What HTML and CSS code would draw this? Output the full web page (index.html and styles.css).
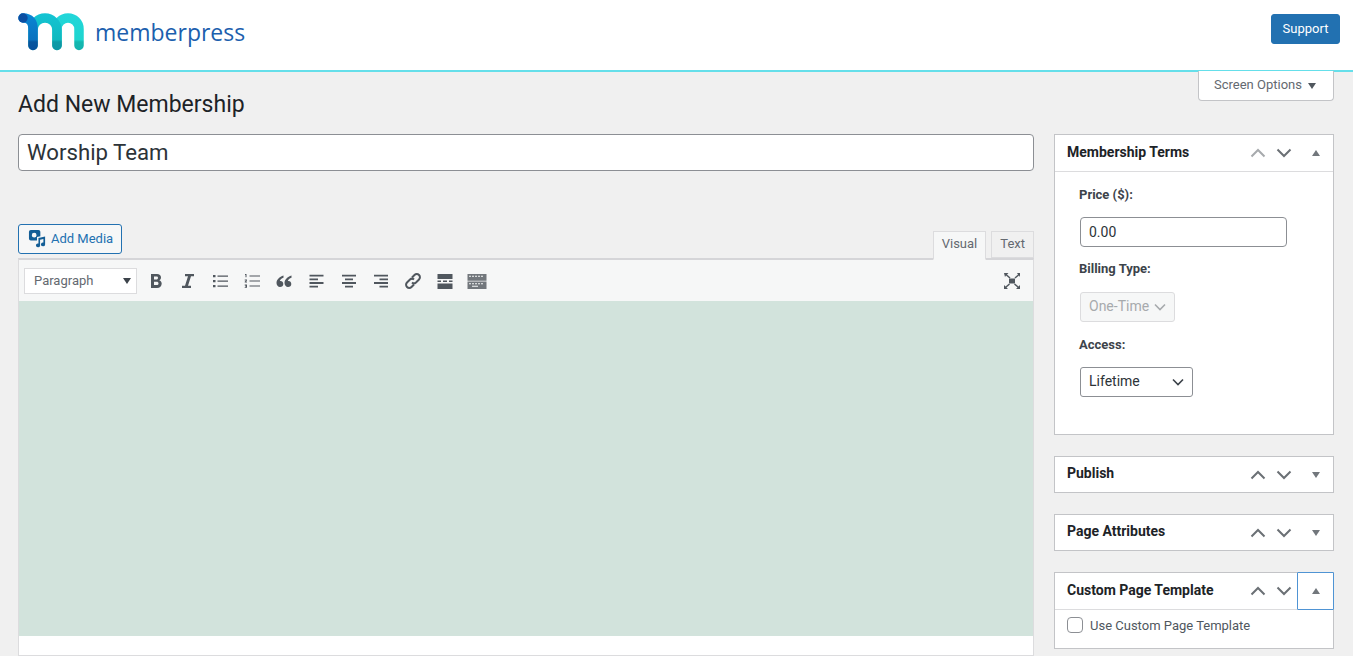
FILE: index.html
```html
<!DOCTYPE html><html lang="en">
<head>
  <meta charset="UTF-8">
  <meta name="viewport" content="width=device-width, initial-scale=1.0">
  <title>Add New Membership</title>
  <link rel="stylesheet" href="styles.css">
</head>
<body>
<svg class="defs" width="0" height="0" aria-hidden="true">
  <defs>
    <linearGradient id="stemA" gradientUnits="userSpaceOnUse" x1="0" y1="0" x2="0" y2="37">
      <stop offset="0" stop-color="#0a86d4"/><stop offset="0.72" stop-color="#0a72bf"/><stop offset="0.78" stop-color="#07569f"/><stop offset="1" stop-color="#07509c"/>
    </linearGradient>
    <linearGradient id="stemB" gradientUnits="userSpaceOnUse" x1="0" y1="0" x2="0" y2="37">
      <stop offset="0" stop-color="#14c4d4"/><stop offset="0.72" stop-color="#0fb9bf"/><stop offset="0.78" stop-color="#0d9aa6"/><stop offset="1" stop-color="#0d96a4"/>
    </linearGradient>
    <linearGradient id="stemC" gradientUnits="userSpaceOnUse" x1="0" y1="0" x2="0" y2="37">
      <stop offset="0" stop-color="#22d6da"/><stop offset="0.72" stop-color="#1fd5cf"/><stop offset="0.78" stop-color="#14b8b0"/><stop offset="1" stop-color="#14b3ae"/>
    </linearGradient>
    <symbol id="up" viewBox="0 0 16 10"><path d="M1.500 8.500 8 2l6.500 6.500" fill="none" stroke="currentColor" stroke-width="2"/></symbol>
    <symbol id="down" viewBox="0 0 16 10"><path d="M1.500 1.500 8 8l6.500-6.500" fill="none" stroke="currentColor" stroke-width="2"/></symbol>
  </defs>
</svg>

<div class="topbar">
  <div class="brand">
    <svg class="logo" viewBox="0 0 66 38" width="66" height="38">
      <path d="M39 32.500V16a11 11 0 0 1 22 0v16.500" fill="none" stroke="url(#stemC)" stroke-width="9.500" stroke-linecap="round"/>
      <path d="M15 32.500V17a12 12 0 0 1 24 0v15.500" fill="none" stroke="url(#stemB)" stroke-width="9.500" stroke-linecap="round"/>
      <path d="M5 5c7 0 10 4 10 11v16.500" fill="none" stroke="url(#stemA)" stroke-width="9.500" stroke-linecap="round"/>
      <circle cx="5" cy="5" r="4.700" fill="#0b4ea2"/>
    </svg>
    <span class="wordmark">memberpress</span>
  </div>
  <button class="support">Support</button>
</div>

<div class="page-head">
  <h1>Add New Membership</h1>
  <div class="screen-options">Screen Options <span class="tri-down small"></span></div>
</div>

<div class="columns">
  <div class="main">
    <input class="title-input" type="text" value="Worship Team">

    <div class="media-row">
      <button class="add-media">
        <svg viewBox="0 0 20 20" width="19" height="19"><path fill="#135e96" fill-rule="evenodd" d="M3 1h8a2 2 0 0 1 2 2v4.500l-3.500.8V12H3a2 2 0 0 1-2-2V3a2 2 0 0 1 2-2zm3.500 3a2.500 2.500 0 1 0 0 5 2.500 2.500 0 0 0 0-5z"/><path fill="#135e96" d="M11 9.500l7-1.500v8.300a2.200 2 0 1 1-1.800-2V10.500l-3.500.8v6a2.200 2 0 1 1-1.700-2z"/></svg>
        Add Media
      </button>
      <div class="tabs">
        <span class="tab active">Visual</span>
        <span class="tab">Text</span>
      </div>
    </div>

    <div class="editor">
      <div class="toolbar">
        <div class="format">Paragraph <span class="tri-down dark"></span></div>
        <span class="tool"><svg viewBox="0 0 20 20"><path d="M5 3h6c2.500 0 4 1.300 4 3.400 0 1.300-.7 2.400-1.800 2.900 1.500.4 2.500 1.700 2.500 3.200 0 2.500-1.800 4.500-4.700 4.500H5zm3 2.500v2.900h2.400c1 0 1.600-.6 1.600-1.500s-.6-1.400-1.600-1.400zm0 5.300v3.200h2.600c1.200 0 1.900-.6 1.900-1.600s-.7-1.600-1.900-1.600z"/></svg></span>
        <span class="tool"><svg viewBox="0 0 20 20"><path d="M7 3h9v2.200h-3L10 14.800h3V17H4v-2.200h3L10 5.200H7z"/></svg></span>
        <span class="tool"><svg viewBox="0 0 20 20"><path d="M3 4h2.500v2.200H3zm0 5h2.500v2.200H3zm0 5h2.500v2.200H3zM7.500 4.400H18v1.400H7.500zm0 5H18v1.400H7.500zm0 5H18v1.400H7.500z"/></svg></span>
        <span class="tool"><svg viewBox="0 0 20 20"><path d="M3 3h1.500v3.300H3.500V4H3zm-.3 5.500h2.300v.9l-1.200 1.200h1.200v.9H2.700v-.8l1.300-1.300H2.700zm0 5h2.300v3.300H2.700v-.8h1.300v-.5H3v-.7h1v-.4H2.700zM7.500 4.400H18v1.200H7.500zm0 5H18v1.200H7.500zm0 5H18v1.200H7.500z"/></svg></span>
        <span class="tool"><svg viewBox="0 0 20 20"><path d="M9.500 4.500C5.500 5.800 2.500 8.500 2.500 12 2.500 14.300 4 16 6 16s3.300-1.400 3.300-3.100S8.100 9.900 6.600 9.900c-.3 0-.6 0-.8.100.4-1.500 1.900-2.700 3.700-3.300zm8 0c-4 1.300-7 4-7 7.500 0 2.300 1.500 4 3.500 4s3.300-1.400 3.300-3.100-1.200-3-2.700-3c-.3 0-.6 0-.8.100.4-1.500 1.900-2.700 3.700-3.300z"/></svg></span>
        <span class="tool"><svg viewBox="0 0 20 20"><path d="M2.500 3.500h14v1.800h-14zm0 3.700H11V9H2.500zm0 3.700h14v1.800h-14zm0 3.700H11v1.800H2.500z" transform="translate(0 .2)"/></svg></span>
        <span class="tool"><svg viewBox="0 0 20 20"><path d="M3 3.500h14v1.800H3zm3 3.700h8V9H6zm-3 3.700h14v1.800H3zm3 3.700h8v1.800H6z" transform="translate(0 .2)"/></svg></span>
        <span class="tool"><svg viewBox="0 0 20 20"><path d="M3 3.500h14v1.800H3zm5.500 3.700H17V9H8.500zM3 10.900h14v1.800H3zm5.500 3.700H17v1.800H8.500z" transform="translate(0 .2)"/></svg></span>
        <span class="tool"><svg viewBox="0 0 20 20"><g fill="none" stroke="currentColor" stroke-width="2"><path d="M9 6.500 11.500 4a3 3 0 0 1 4.500 4.500l-3 3a3 3 0 0 1-4 0"/><path d="M11 13.500 8.500 16A3 3 0 0 1 4 11.500l3-3a3 3 0 0 1 4 0"/></g></svg></span>
        <span class="tool"><svg viewBox="0 0 20 20"><path d="M2.500 3h15v5h-15zm0 9.500h15V18h-15zm0-3h3.500v1.600H2.500zm5.500 0h4v1.600H8zm6 0h3.500v1.600H14z"/></svg></span>
        <span class="tool table"><svg viewBox="0 0 20 20"><path fill-rule="evenodd" d="M.500 3h19v6.700H.500zm1.500 1.800v1h2v-1zm3 0v1h2v-1zm3 0v1h2v-1zm3 0v1h2v-1zm3 0v1h2v-1zM.500 10.500h19V18H.500zm1.500 1.800v1h2v-1zm3 0v1h2v-1zm3 0v1h2v-1zm3 0v1h2v-1zm3 0v1h2v-1zm-9 2.500v1h6v-1z"/></svg></span>
        <span class="tool fullscreen"><svg viewBox="0 0 20 20"><path d="M7 7.500h6v5H7z"/><path d="M2 2h4.500L5 3.500l3.500 3-1 1-3.500-3L3 6zm16 0v4l-1-1.500-3.500 3-1-1 3.500-3L15 2zM2 18v-4l1.500 1.500 3.500-3 1 1-3.500 3L6 18zm16 0h-4l1.500-1.500-3.500-3 1-1 3.500 3L18 14z"/></svg></span>
      </div>
      <div class="editor-body"></div>
      <div class="editor-foot"></div>
    </div>
  </div>

  <div class="side">
    <div class="box">
      <div class="box-head">
        <h2>Membership Terms</h2>
        <svg class="arrow faint"><use href="#up"/></svg>
        <svg class="arrow"><use href="#down"/></svg>
        <span class="toggle"><span class="tri-up"></span></span>
      </div>
      <div class="terms">
        <label>Price ($):</label>
        <input class="price" type="text" value="0.00">
        <label>Billing Type:</label>
        <select class="pick disabled" disabled><option>One-Time</option></select>
        <label>Access:</label>
        <select class="pick lifetime"><option>Lifetime</option></select>
      </div>
    </div>

    <div class="box">
      <div class="box-head closed">
        <h2>Publish</h2>
        <svg class="arrow"><use href="#up"/></svg>
        <svg class="arrow"><use href="#down"/></svg>
        <span class="toggle"><span class="tri-down"></span></span>
      </div>
    </div>

    <div class="box">
      <div class="box-head closed">
        <h2>Page Attributes</h2>
        <svg class="arrow"><use href="#up"/></svg>
        <svg class="arrow"><use href="#down"/></svg>
        <span class="toggle"><span class="tri-down"></span></span>
      </div>
    </div>

    <div class="box">
      <div class="box-head">
        <h2>Custom Page Template</h2>
        <svg class="arrow"><use href="#up"/></svg>
        <svg class="arrow"><use href="#down"/></svg>
        <span class="toggle focused"><span class="tri-up"></span></span>
      </div>
      <div class="template">
        <span class="check"></span>
        <span>Use Custom Page Template</span>
      </div>
    </div>
  </div>
</div>
</body>
</html>
```

FILE: styles.css
```css
* { box-sizing: border-box; }
html, body {
  height: 656px;
  overflow: hidden;
}
body {
  margin: 0;
  background: #f0f0f0;
  color: #3c434a;
  font-family: Roboto, 'Liberation Sans', sans-serif;
  font-size: 13px;
}
.defs {
  position: absolute;
}
button {
  font-family: inherit;
  cursor: pointer;
}

.topbar {
  display: flex;
  justify-content: space-between;
  height: 72px;
  padding: 14px 13px 0 18px;
  background: #fff;
  border-bottom: 2px solid #65dfea;
}
.brand {
  display: flex;
  align-items: flex-start;
}
.logo {
  margin-top: -1px;
}
.wordmark {
  margin: 3px 0 0 11px;
  color: #1c5fae;
  font-family: 'Open Sans', sans-serif;
  font-size: 23px;
  line-height: 31px;
}
.support {
  width: 69px;
  height: 30px;
  padding: 0 0 2px;
  background: #2271b1;
  border: 1px solid #2271b1;
  border-radius: 3px;
  color: #fff;
  font-size: 13px;
}

.page-head {
  display: flex;
  justify-content: space-between;
  align-items: flex-start;
  height: 62px;
  padding: 0 19px 0 18px;
}
.page-head h1 {
  margin: 18px 0 0;
  color: #1d2327;
  font-size: 23px;
  font-weight: 400;
  line-height: 30px;
}
.screen-options {
  display: flex;
  justify-content: center;
  align-items: center;
  gap: 6px;
  width: 136px;
  height: 30px;
  margin-top: -1px;
  padding: 0 2px 2px 0;
  background: #fff;
  border: 1px solid #c3c4c7;
  border-top: none;
  border-radius: 0 0 4px 4px;
  color: #646970;
  font-size: 13px;
}

.columns {
  display: flex;
  gap: 20px;
  padding: 0 19px 0 18px;
}
.main {
  flex: 1;
  min-width: 0;
}
.side {
  width: 280px;
}

.title-input {
  display: block;
  width: 100%;
  height: 37px;
  padding: 0 8px 2px;
  background: #fff;
  border: 1px solid #8c8f94;
  border-radius: 4px;
  color: #2c3338;
  font-family: inherit;
  font-size: 22.200px;
  outline: none;
}

.media-row {
  display: flex;
  justify-content: space-between;
  align-items: flex-end;
  height: 87px;
  position: relative;
  z-index: 1;
}
.add-media {
  display: flex;
  align-items: center;
  gap: 4px;
  width: 104px;
  height: 30px;
  margin-bottom: 4px;
  padding: 0 0 2px 9px;
  background: #f6f7f7;
  border: 1px solid #2271b1;
  border-radius: 3px;
  color: #2271b1;
  font-size: 13px;
}
.tabs {
  display: flex;
  align-items: flex-start;
  gap: 5px;
}
.tab {
  height: 27px;
  padding: 0 8px;
  background: #f0f0f0;
  border: 1px solid #dcdcde;
  color: #646970;
  font-size: 13px;
  line-height: 24px;
}
.tab.active {
  height: 29px;
  margin-bottom: -2px;
  background: #f6f7f7;
  border-bottom-color: #f6f7f7;
}

.editor {
  height: 398px;
  background: #fff;
  border: 1px solid #dcdcde;
  border-top: 2px solid #d5d5d8;
}
.toolbar {
  display: flex;
  align-items: center;
  height: 41px;
  padding-left: 5px;
  background: #f6f7f7;
}
.format {
  display: flex;
  justify-content: space-between;
  align-items: center;
  width: 113px;
  height: 26px;
  margin-right: 3px;
  padding: 0 5px 0 9px;
  background: #fff;
  border: 1px solid #dcdcde;
  color: #646970;
  font-size: 13px;
}
.tool {
  display: flex;
  justify-content: center;
  align-items: center;
  width: 32.100px;
  color: #50575e;
}
.tool.table {
  color: #72777c;
}
.tool svg {
  width: 20px;
  height: 20px;
  fill: currentColor;
}
.fullscreen {
  margin-left: auto;
  margin-right: 5px;
}
.editor-body {
  height: 335px;
  background: #d2e3dc;
}

.box {
  margin-bottom: 21px;
  background: #fff;
  border: 1px solid #c3c4c7;
}
.box-head {
  display: flex;
  align-items: center;
  height: 37px;
  padding-left: 12px;
  border-bottom: 1px solid #dcdcde;
}
.box-head.closed {
  height: 35px;
  border-bottom: none;
}
.box-head h2 {
  flex: 1;
  margin: 0;
  padding-bottom: 2px;
  color: #1d2327;
  font-size: 14px;
  font-weight: 700;
  line-height: 20px;
}
.box-head.closed h2 {
  padding-bottom: 3px;
}
.arrow {
  width: 16px;
  height: 10px;
  margin-right: 10px;
  color: #6b7075;
}
.arrow + .arrow {
  margin-right: 6px;
}
.arrow.faint {
  color: #a7aaad;
}
.toggle {
  display: flex;
  justify-content: center;
  align-items: center;
  width: 37px;
  height: 37px;
  margin-left: -1px;
  margin-right: -1px;
}
.toggle.focused {
  margin-top: -1px;
  height: 38px;
  border: 1px solid #4f94d4;
  border-radius: 1px;
}
.tri-up, .tri-down {
  width: 0;
  height: 0;
  border-left: 4.500px solid transparent;
  border-right: 4.500px solid transparent;
}
.tri-up {
  border-bottom: 6px solid #72777c;
}
.tri-down {
  border-top: 6px solid #72777c;
}
.tri-down.small {
  margin-top: 2px;
  border-top-color: #50575e;
}
.tri-down.dark {
  border-top-color: #3c434a;
}

.terms {
  display: flex;
  flex-direction: column;
  align-items: flex-start;
  height: 262px;
  padding: 14px 24px 0;
}
.terms label {
  color: #3c434a;
  font-size: 13px;
  font-weight: 700;
  line-height: 18px;
}
.price {
  width: 207px;
  height: 30px;
  margin: 13px 0 13px 1px;
  padding: 0 8px;
  background: #fff;
  border: 1px solid #8c8f94;
  border-radius: 4px;
  color: #2c3338;
  font-family: inherit;
  font-size: 14px;
  outline: none;
}
.pick {
  appearance: none;
  height: 30px;
  padding: 0 24px 2px 8px;
  background: #fff url("data:image/svg+xml,%3Csvg xmlns='http://www.w3.org/2000/svg' width='12' height='8'%3E%3Cpath d='M1 1.500 6 6.500l5-5' fill='none' stroke='%233c434a' stroke-width='1.600'/%3E%3C/svg%3E") no-repeat right 8px center;
  border: 1px solid #8c8f94;
  border-radius: 3px;
  color: #2c3338;
  font-family: inherit;
  font-size: 14px;
}
.pick.disabled {
  width: 95px;
  margin: 14px 0 14px 1px;
  background-color: #f6f7f7;
  background-image: url("data:image/svg+xml,%3Csvg xmlns='http://www.w3.org/2000/svg' width='12' height='8'%3E%3Cpath d='M1 1.500 6 6.500l5-5' fill='none' stroke='%23a7aaad' stroke-width='1.600'/%3E%3C/svg%3E");
  border-color: #dcdcde;
  color: #a7aaad;
  opacity: 1;
}
.pick.lifetime {
  width: 113px;
  margin: 13px 0 0 1px;
}

.template {
  display: flex;
  align-items: center;
  gap: 7px;
  height: 38px;
  padding: 0 12px 8px;
  color: #50575e;
  font-size: 13px;
}
.check {
  width: 16px;
  height: 16px;
  background: #fff;
  border: 1px solid #8c8f94;
  border-radius: 4px;
}
```
